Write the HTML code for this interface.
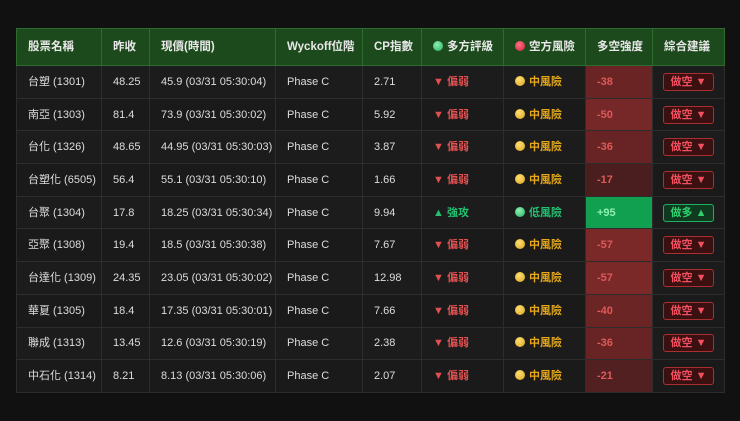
<!DOCTYPE html>
<html><head><meta charset="utf-8"><style>
html,body{margin:0;padding:0;background:#111;width:740px;height:421px;overflow:hidden}
body{font-family:"Liberation Sans","Noto Sans CJK TC",sans-serif;}
table{position:absolute;left:16px;top:28px;border-collapse:collapse;width:708px;table-layout:fixed;font-size:11px;color:#ddd}
th{background:#1d4a1d;border:1px solid #2f6a2f;height:36px;text-align:left;padding:0 0 0 11px;font-weight:bold;color:#e8e8e8;font-size:11.5px;vertical-align:middle;line-height:14px}
td{background:#1a1a1a;border:1px solid #2d2d2d;height:31.7px;padding:0 0 0 11px;white-space:nowrap;vertical-align:middle;line-height:14px}
tr:nth-child(even) td{background:#1c1c1c}
.dn{color:#e05050;font-weight:bold}
.up{color:#22c070;font-weight:bold}
.mid{color:#e6a818;font-weight:bold}
.dot{display:inline-block;width:10px;height:10px;border-radius:50%;vertical-align:-1px;margin-right:4px}
.y{background:radial-gradient(circle at 40% 35%,#ffe070,#d8a020)}
.g{background:radial-gradient(circle at 40% 35%,#8ef0b0,#22b060)}
.r{background:radial-gradient(circle at 40% 35%,#ff7080,#d02040)}
td.s{color:#e05858;font-weight:bold}
td.sg{background:#10a050!important;color:#8ff0b0;font-weight:bold}
.b{display:inline-block;border:1px solid #a83030;background:#3a1010;color:#f05060;border-radius:3px;padding:1px 7px;font-weight:bold;font-size:11px;line-height:14px;vertical-align:middle}
.bg{border-color:#20b060;background:#0f3a1f;color:#30d070}
td.c{padding-left:0;text-align:center}
</style></head><body>
<table>
<colgroup><col style="width:85px"><col style="width:48px"><col style="width:126px"><col style="width:87px"><col style="width:59px"><col style="width:82px"><col style="width:82px"><col style="width:67px"><col style="width:72px"></colgroup>
<tr><th>股票名稱</th><th>昨收</th><th>現價(時間)</th><th>Wyckoff位階</th><th>CP指數</th><th><span class="dot g"></span>多方評級</th><th><span class="dot r"></span>空方風險</th><th>多空強度</th><th>綜合建議</th></tr>
<tr><td>台塑 (1301)</td><td>48.25</td><td>45.9 (03/31 05:30:04)</td><td>Phase C</td><td>2.71</td><td class="dn">▼ 偏弱</td><td class="mid"><span class="dot y"></span>中風險</td><td class="s" style="background:#6a2424">-38</td><td class="c"><span class="b">做空 ▼</span></td></tr>
<tr><td>南亞 (1303)</td><td>81.4</td><td>73.9 (03/31 05:30:02)</td><td>Phase C</td><td>5.92</td><td class="dn">▼ 偏弱</td><td class="mid"><span class="dot y"></span>中風險</td><td class="s" style="background:#762727">-50</td><td class="c"><span class="b">做空 ▼</span></td></tr>
<tr><td>台化 (1326)</td><td>48.65</td><td>44.95 (03/31 05:30:03)</td><td>Phase C</td><td>3.87</td><td class="dn">▼ 偏弱</td><td class="mid"><span class="dot y"></span>中風險</td><td class="s" style="background:#682424">-36</td><td class="c"><span class="b">做空 ▼</span></td></tr>
<tr><td>台塑化 (6505)</td><td>56.4</td><td>55.1 (03/31 05:30:10)</td><td>Phase C</td><td>1.66</td><td class="dn">▼ 偏弱</td><td class="mid"><span class="dot y"></span>中風險</td><td class="s" style="background:#4a1e1e">-17</td><td class="c"><span class="b">做空 ▼</span></td></tr>
<tr><td>台聚 (1304)</td><td>17.8</td><td>18.25 (03/31 05:30:34)</td><td>Phase C</td><td>9.94</td><td class="up">▲ 強攻</td><td class="up"><span class="dot g"></span>低風險</td><td class="sg">+95</td><td class="c"><span class="b bg">做多 ▲</span></td></tr>
<tr><td>亞聚 (1308)</td><td>19.4</td><td>18.5 (03/31 05:30:38)</td><td>Phase C</td><td>7.67</td><td class="dn">▼ 偏弱</td><td class="mid"><span class="dot y"></span>中風險</td><td class="s" style="background:#7a2828">-57</td><td class="c"><span class="b">做空 ▼</span></td></tr>
<tr><td>台達化 (1309)</td><td>24.35</td><td>23.05 (03/31 05:30:02)</td><td>Phase C</td><td>12.98</td><td class="dn">▼ 偏弱</td><td class="mid"><span class="dot y"></span>中風險</td><td class="s" style="background:#7a2828">-57</td><td class="c"><span class="b">做空 ▼</span></td></tr>
<tr><td>華夏 (1305)</td><td>18.4</td><td>17.35 (03/31 05:30:01)</td><td>Phase C</td><td>7.66</td><td class="dn">▼ 偏弱</td><td class="mid"><span class="dot y"></span>中風險</td><td class="s" style="background:#6c2525">-40</td><td class="c"><span class="b">做空 ▼</span></td></tr>
<tr><td>聯成 (1313)</td><td>13.45</td><td>12.6 (03/31 05:30:19)</td><td>Phase C</td><td>2.38</td><td class="dn">▼ 偏弱</td><td class="mid"><span class="dot y"></span>中風險</td><td class="s" style="background:#682424">-36</td><td class="c"><span class="b">做空 ▼</span></td></tr>
<tr><td>中石化 (1314)</td><td>8.21</td><td>8.13 (03/31 05:30:06)</td><td>Phase C</td><td>2.07</td><td class="dn">▼ 偏弱</td><td class="mid"><span class="dot y"></span>中風險</td><td class="s" style="background:#522020">-21</td><td class="c"><span class="b">做空 ▼</span></td></tr>
</table>
</body></html>
